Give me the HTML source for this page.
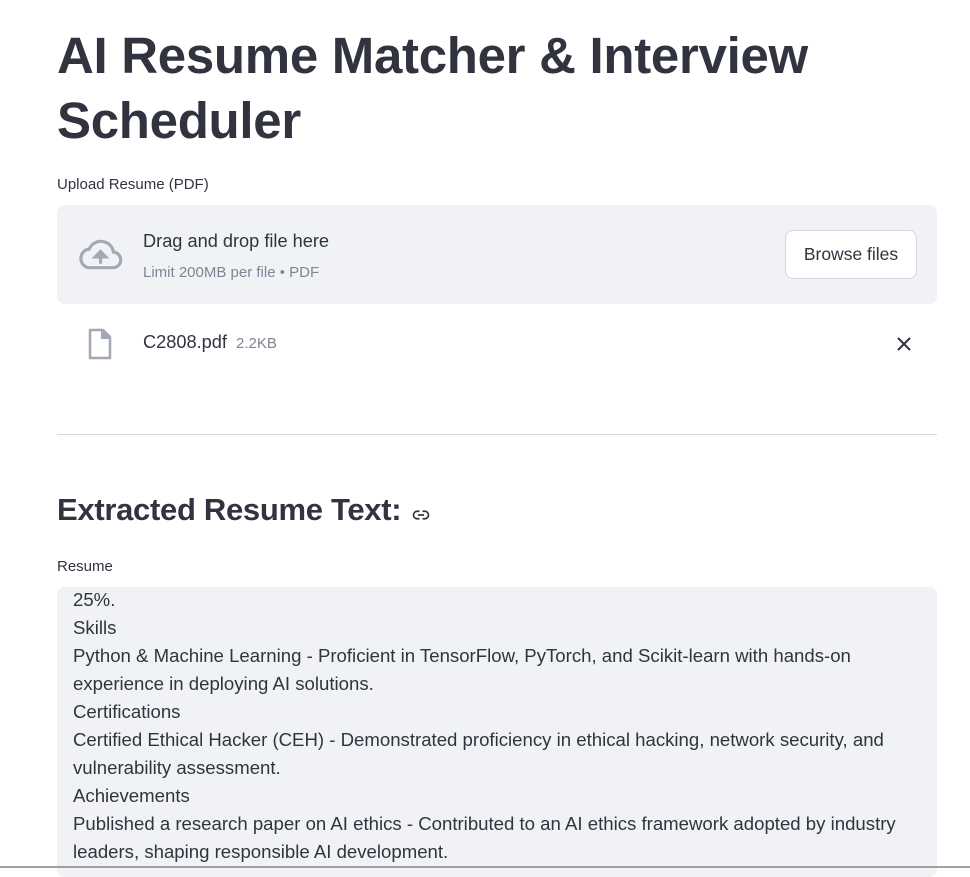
<!DOCTYPE html>
<html><head><meta charset="utf-8"><style>
*{margin:0;padding:0;box-sizing:border-box}
body{width:970px;height:868px;overflow:hidden;background:#fff;font-family:"Liberation Sans",sans-serif;color:#31333f;position:relative}
.a{position:absolute;white-space:nowrap}
h1{position:absolute;left:57px;top:23px;font-size:51px;font-weight:700;line-height:65px;letter-spacing:-0.3px;color:#31333f}
.lbl{font-size:15px;color:#31333f}
.drop{position:absolute;left:57px;top:205px;width:880px;height:99px;background:#f0f2f6;border-radius:8px}
.btn{position:absolute;left:785px;top:230px;width:132px;height:49px;background:#fff;border:1px solid #d5d7dd;border-radius:8px;font-size:17.5px;text-align:center;line-height:47px}
.hr{position:absolute;left:57px;top:434px;width:880px;height:1px;background:#d5d7dd}
.ta{position:absolute;left:57px;top:587px;width:880px;height:290px;background:#f0f2f6;border-radius:8px;overflow:hidden}
.ta div{position:absolute;left:16px;top:-1px;font-size:18.6px;line-height:28px;color:#31333f;white-space:nowrap}
</style></head><body>
<h1>AI Resume Matcher &amp; Interview<br>Scheduler</h1>
<div class="a lbl" style="left:57px;top:176px">Upload Resume (PDF)</div>
<div class="drop"></div>
<svg class="a" style="left:77px;top:238px" width="47" height="32" viewBox="0 0 24 16"><path d="M6 15h12a4 4 0 0 0 .6-8 6.5 6.5 0 0 0-12.4-1.5A4.8 4.8 0 0 0 6 15z" fill="none" stroke="#a3a8b8" stroke-width="1.6"/><path d="M12 13V8.5M9.3 9.5 12 6.7l2.7 2.8z" stroke="#a3a8b8" stroke-width="1.6" fill="#a3a8b8"/></svg>
<div class="a" style="left:143px;top:231px;font-size:18.2px">Drag and drop file here</div>
<div class="a" style="left:143px;top:264px;font-size:15px;color:#808495">Limit 200MB per file • PDF</div>
<div class="btn">Browse files</div>
<svg class="a" style="left:88px;top:328px" width="24" height="32" viewBox="0 0 24 32"><path d="M2 2h13l7 7v21H2z" fill="none" stroke="#a3a8b8" stroke-width="2.5" stroke-linejoin="round"/><path d="M14 2v8h8" fill="#a3a8b8" stroke="#a3a8b8" stroke-width="2"/></svg>
<div class="a" style="left:143px;top:332px;font-size:18.2px">C2808.pdf <span style="font-size:15px;color:#808495;margin-left:4px">2.2KB</span></div>
<svg class="a" style="left:896px;top:336px" width="16" height="16" viewBox="0 0 16 16"><path d="M2 2l12 12M14 2 2 14" stroke="#31333f" stroke-width="2"/></svg>
<div class="hr"></div>
<div class="a" style="left:57px;top:492px;font-size:31px;font-weight:700;letter-spacing:-0.3px">Extracted Resume Text:</div>
<svg class="a" style="left:410px;top:506px" width="22" height="18" viewBox="0 0 24 24"><path d="M10 7H7a5 5 0 0 0 0 10h3M14 7h3a5 5 0 0 1 0 10h-3M8 12h8" fill="none" stroke="#31333f" stroke-width="2.2"/></svg>
<div class="a lbl" style="left:57px;top:558px">Resume</div>
<div class="ta"><div>25%.<br>Skills<br>Python &amp; Machine Learning - Proficient in TensorFlow, PyTorch, and Scikit-learn with hands-on<br>experience in deploying AI solutions.<br>Certifications<br>Certified Ethical Hacker (CEH) - Demonstrated proficiency in ethical hacking, network security, and<br>vulnerability assessment.<br>Achievements<br>Published a research paper on AI ethics - Contributed to an AI ethics framework adopted by industry<br>leaders, shaping responsible AI development.</div></div>
<div class="a" style="left:0;top:866px;width:970px;height:2px;background:#a0a0a0"></div>
</body></html>
